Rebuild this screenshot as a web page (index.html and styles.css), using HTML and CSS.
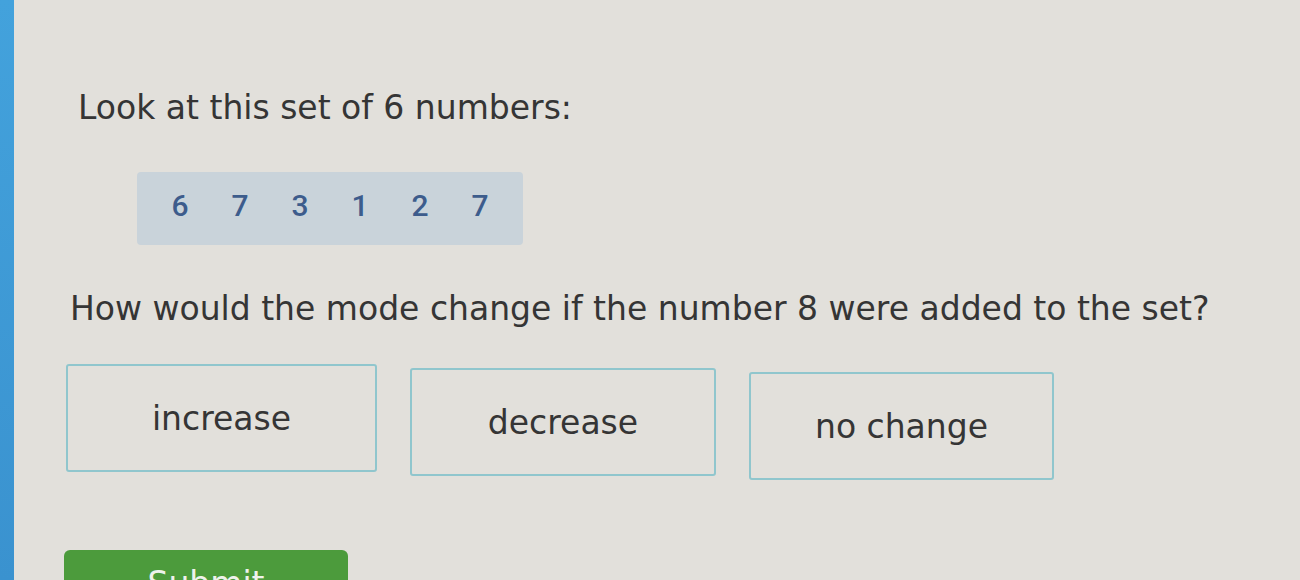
FILE: index.html
```html
<!DOCTYPE html>
<html lang="en">
<head>
    <meta charset="UTF-8">
    <meta name="viewport" content="width=device-width, initial-scale=1.0">
    <title>Mode - Practice</title>
    <link rel="stylesheet" href="styles.css">
</head>
<body>

    <div class="page">
        <div class="side-bar"></div>

        <main class="question">
            <p class="prompt">Look at this set of 6 numbers:</p>

            <div class="number-set">
                <span>6</span>
                <span>7</span>
                <span>3</span>
                <span>1</span>
                <span>2</span>
                <span>7</span>
            </div>

            <p class="ask">How would the mode change if the number 8 were added to the set?</p>

            <div class="choices">
                <button class="choice">increase</button>
                <button class="choice">decrease</button>
                <button class="choice">no change</button>
            </div>

            <button class="submit-btn">Submit</button>
        </main>
    </div>

</body>
</html>
```

FILE: styles.css
```css
/* General Styling */
body {
    font-family: "DejaVu Sans", Verdana, sans-serif;
    margin: 0;
    padding: 0;
    background-color: #e2e0db;
    color: #353535;
    overflow: hidden;
}

.page {
    display: flex;
    height: 580px;
    overflow: hidden;
}

/* Left accent bar */
.side-bar {
    width: 14px;
    flex-shrink: 0;
    background: linear-gradient(#43a2dc, #3a92cf);
}

/* Question area */
.question {
    flex: 1;
    padding: 88px 0 0 52px;
}

.prompt {
    font-size: 33px;
    margin: 0 0 0 12px;
}

.number-set {
    display: flex;
    width: 386px;
    height: 73px;
    box-sizing: border-box;
    margin: 45px 0 0 71px;
    padding: 0 0 6px 31px;
    align-items: center;
    gap: 36px;
    background-color: #c9d3da;
    border-radius: 4px;
    font-family: Roboto, "Liberation Sans", sans-serif;
    font-weight: 500;
    font-size: 30px;
    color: #3d5c8c;
}

.number-set span {
    width: 24px;
    text-align: center;
}

.ask {
    font-size: 33px;
    margin: 44px 0 0 4px;
}

.choices {
    display: flex;
    gap: 33px;
    margin: 36px 0 0 0;
}

.choice {
    width: 311px;
    height: 108px;
    background: transparent;
    border: 2px solid #90c6cd;
    border-radius: 3px;
    font-family: inherit;
    font-size: 33px;
    color: #353535;
    cursor: pointer;
}

.choice:nth-child(2) {
    width: 306px;
    margin-top: 4px;
}

.choice:nth-child(3) {
    width: 305px;
    margin-top: 8px;
}

.submit-btn {
    display: block;
    width: 284px;
    height: 66px;
    margin-top: 70px;
    margin-left: -2px;
    background-color: #4c9b3c;
    border: none;
    border-radius: 6px;
    padding: 0;
    font-family: inherit;
    font-size: 33px;
    color: #eef2ec;
    cursor: pointer;
}
```
